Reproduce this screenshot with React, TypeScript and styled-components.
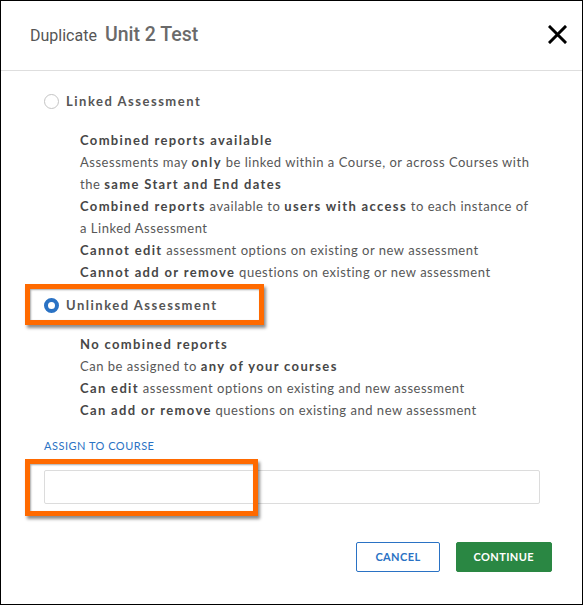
import React from 'react';
import styled, { createGlobalStyle } from 'styled-components';

const blue = '#2a72c4';
const green = '#2a8743';
const orange = '#ff6a00';

const GlobalStyle = createGlobalStyle`
  html, body {
    margin: 0;
    padding: 0;
    background: #ffffff;
  }
  * {
    box-sizing: border-box;
  }
`;

const Dialog = styled.div`
  position: relative;
  width: 583px;
  height: 605px;
  border: 1px solid #000000;
  background: #ffffff;
  font-family: Lato, 'Open Sans', sans-serif;
`;

const Header = styled.div`
  height: 70px;
  display: flex;
  align-items: center;
  justify-content: space-between;
  padding: 0 12px 3px 29px;
  border-bottom: 1px solid #dedede;
`;

const Title = styled.div`
  display: flex;
  align-items: baseline;
  gap: 8px;
  font-family: Roboto, 'Noto Sans', sans-serif;
  color: #555555;
`;

const TitleLead = styled.span`
  font-size: 16px;
  font-weight: 400;
`;

const TitleName = styled.span`
  font-size: 19.5px;
  font-weight: 500;
  color: #6a6a6a;
`;

const CloseButton = styled.button`
  width: 26px;
  height: 26px;
  padding: 0;
  border: none;
  background: none;
  display: flex;
  align-items: center;
  justify-content: center;
  cursor: pointer;
`;

const Body = styled.div`
  padding: 19px 43px 0 43px;
`;

const OptionRow = styled.label`
  display: flex;
  align-items: center;
  gap: 7px;
  height: 22px;
  font-size: 13px;
  font-weight: 700;
  letter-spacing: 1.5px;
  color: #555555;
`;

const Radio = styled.span<{ $checked?: boolean }>`
  width: 15px;
  height: 15px;
  border-radius: 50%;
  border: ${p => (p.$checked ? `4px solid ${blue}` : '1px solid #c4c4c4')};
  background: #ffffff;
`;

const Details = styled.div<{ $last?: boolean }>`
  margin: 17px 0 ${p => (p.$last ? '0' : '11px')} 36px;
  font-size: 13px;
  line-height: 22px;
  letter-spacing: 0.52px;
  color: #575757;
  white-space: nowrap;

  b {
    font-weight: 700;
    color: #474747;
    letter-spacing: 1.35px;
  }
`;

const FieldLabel = styled.div`
  margin-top: 17px;
  font-size: 11px;
  line-height: 16px;
  letter-spacing: 0.5px;
  color: ${blue};
  text-transform: uppercase;
`;

const CourseInput = styled.input`
  display: block;
  width: 496px;
  height: 34px;
  margin-top: 16px;
  border: 1px solid #dcdcdc;
  border-radius: 2px;
  font-family: inherit;
  font-size: 13px;
  padding: 0 10px;
  outline: none;
`;

const Footer = styled.div`
  display: flex;
  justify-content: flex-end;
  gap: 16px;
  padding: 38px 30px 0 0;
`;

const Button = styled.button<{ $primary?: boolean }>`
  height: 30px;
  padding: 0 ${p => (p.$primary ? '17px' : '18px')} 2px;
  border-radius: 2px;
  border: 1px solid ${p => (p.$primary ? green : blue)};
  background: ${p => (p.$primary ? green : '#ffffff')};
  color: ${p => (p.$primary ? '#ffffff' : blue)};
  font-family: Lato, 'Open Sans', sans-serif;
  font-size: 11px;
  font-weight: 700;
  letter-spacing: 0.4px;
  text-transform: uppercase;
  cursor: pointer;
`;

const Highlight = styled.div<{ $left: number; $top: number; $w: number; $h: number }>`
  position: absolute;
  left: ${p => p.$left}px;
  top: ${p => p.$top}px;
  width: ${p => p.$w}px;
  height: ${p => p.$h}px;
  border: 5px solid ${orange};
  box-shadow: 2px 3px 3px rgba(0, 0, 0, 0.45), inset 1px 1px 2px rgba(0, 0, 0, 0.35);
  pointer-events: none;
`;

export default function App() {
  return (
    <>
      <GlobalStyle />
      <Dialog>
        <Header>
          <Title>
            <TitleLead>Duplicate</TitleLead>
            <TitleName>Unit 2 Test</TitleName>
          </Title>
          <CloseButton aria-label="Close">
            <svg width="19" height="19" viewBox="0 0 19 19">
              <path d="M2 2 L17 17 M17 2 L2 17" stroke="#000" strokeWidth="3" strokeLinecap="square" />
            </svg>
          </CloseButton>
        </Header>
        <Body>
          <OptionRow>
            <Radio />
            Linked Assessment
          </OptionRow>
          <Details>
            <b>Combined reports available</b>
            <br />
            Assessments may <b>only</b> be linked within a Course, or across Courses with
            <br />
            the <b>same Start and End dates</b>
            <br />
            <b>Combined reports</b> available to <b>users with access</b> to each instance of
            <br />
            a Linked Assessment
            <br />
            <b>Cannot edit</b> assessment options on existing or new assessment
            <br />
            <b>Cannot add or remove</b> questions on existing or new assessment
          </Details>
          <OptionRow>
            <Radio $checked />
            Unlinked Assessment
          </OptionRow>
          <Details $last>
            <b>No combined reports</b>
            <br />
            Can be assigned to <b>any of your courses</b>
            <br />
            <b>Can edit</b> assessment options on existing and new assessment
            <br />
            <b>Can add or remove</b> questions on existing and new assessment
          </Details>
          <FieldLabel>Assign to course</FieldLabel>
          <CourseInput />
        </Body>
        <Footer>
          <Button>Cancel</Button>
          <Button $primary>Continue</Button>
        </Footer>
        <Highlight $left={24} $top={283} $w={239} $h={41} />
        <Highlight $left={24} $top={458} $w={233} $h={57} />
      </Dialog>
    </>
  );
}
